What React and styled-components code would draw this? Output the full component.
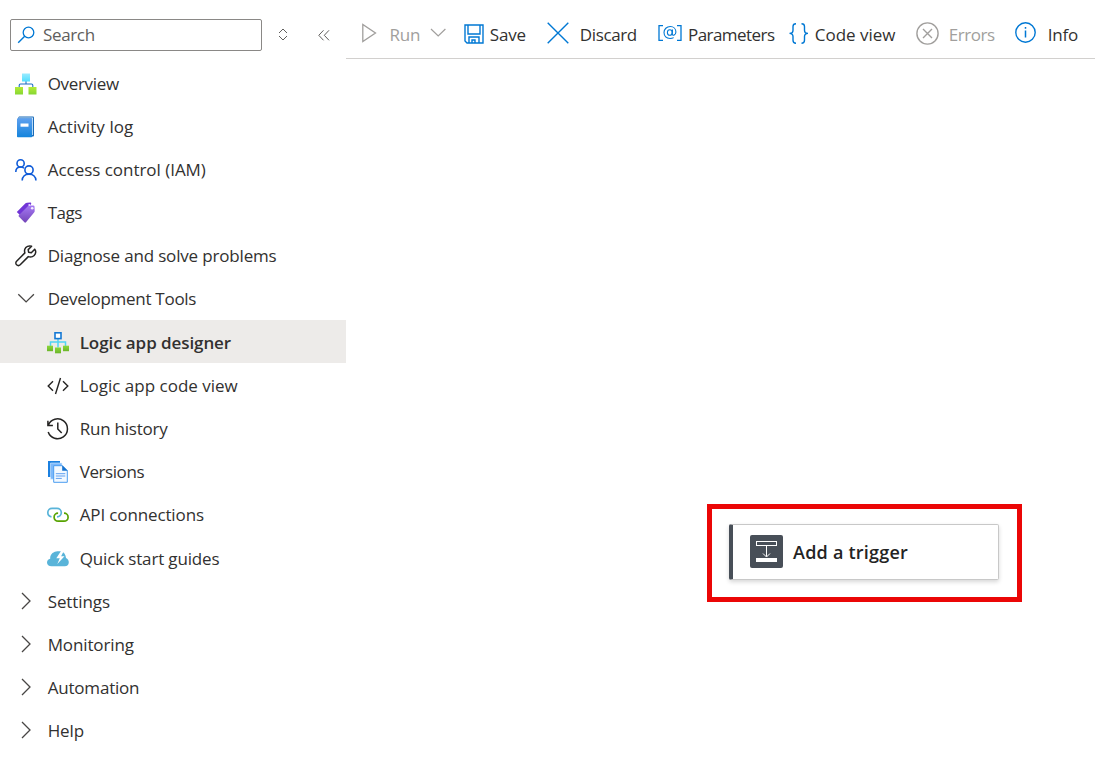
import React from 'react';
import styled, { createGlobalStyle } from 'styled-components';

const GlobalStyle = createGlobalStyle`
  * { box-sizing: border-box; }
  body { margin: 0; background: #fff; color: #323130; font-family: "Open Sans", "Noto Sans", sans-serif; font-size: 17px; }
`;
const Page = styled.div`display: flex; height: 764px; overflow: hidden;`;
const Sidebar = styled.nav`width: 346px; flex: none; display: flex; flex-direction: column;`;
const SearchBar = styled.div`height: 61.2px; padding: 19px 0 0 10px; display: flex; align-items: flex-start;`;
const SearchBox = styled.div`
  width: 252px; height: 32px; border: 1px solid #8a8886; border-radius: 2px; color: #605e5c;
  display: flex; align-items: center; padding-left: 6px; gap: 8px;
`;
const SearchTool = styled.div`height: 32px; display: flex; align-items: center; margin-left: ${p => p.$gap}px;`;
const Label = styled.span`white-space: nowrap; line-height: 24px; letter-spacing: ${p => p.$ls || 0}px;`;
const NavRow = styled.div`
  height: 43.18px; flex: none; display: flex; align-items: center; gap: 10.7px;
  padding-top: 1.7px;
  padding-left: ${p => (p.$sub ? 47 : 15)}px;
  background: ${p => (p.$active ? '#edebe9' : 'transparent')};
  font-weight: ${p => (p.$active ? 600 : 400)};
`;
const Main = styled.main`flex: 1; min-width: 0; display: flex; flex-direction: column;`;
const Toolbar = styled.div`height: 59px; flex: none; border-bottom: 1px solid #d2d0ce; display: flex; padding: 8px 0 0 16px; align-items: center;`;
const ToolButton = styled.div`
  width: ${p => p.$w}px; flex: none; display: flex; align-items: center; gap: ${p => p.$gap}px;
  color: ${p => (p.$disabled ? '#a19f9d' : '#323130')};
`;
const ToolLabel = styled(Label)`padding-top: 3px;`;
const Canvas = styled.section`flex: 1; display: flex; padding: 445px 0 0 361px; align-items: flex-start;`;
const Highlight = styled.div`width: 315px; height: 98px; border: 5px solid #eb0606; padding: 15px 0 0 17px;`;
const TriggerCard = styled.div`
  width: 270px; height: 56px; border: 1px solid #c8c8c8; border-left: 4px solid #484f58; border-radius: 2px;
  box-shadow: 0 2px 4px rgba(0,0,0,.16); display: flex; align-items: center; gap: 10.5px; padding: 0 0 1px 16.5px;
  font-weight: 600; font-size: 18px; color: #242424;
`;

const Svg = styled.svg`flex: none; display: block; fill: none; overflow: visible;`;
const Ic = ({ w = 22, h = 22, children }) => <Svg width={w} height={h} viewBox={`0 0 ${w} ${h}`}>{children}</Svg>;

const icons = {
  overview: <Ic>
    <defs>
      <linearGradient id="cy" x2="0" y2="1"><stop stopColor="#9cebff" /><stop offset="1" stopColor="#50dfff" /></linearGradient>
      <linearGradient id="gr" x2="0" y2="1"><stop stopColor="#b4ec36" /><stop offset="1" stopColor="#86d633" /></linearGradient>
    </defs>
    <path d="M11 8v3M4.200 14v-1.700q0-1.300 1.300-1.300h11q1.300 0 1.300 1.300V14" stroke="#1f6fc5" strokeWidth="1.100" />
    <rect x="7" y="0.500" width="8" height="8" fill="url(#cy)" />
    <rect x="0" y="14" width="8" height="7.500" fill="url(#gr)" /><rect x="13.500" y="14" width="8" height="7.500" fill="url(#gr)" />
  </Ic>,
  log: <Ic>
    <defs><linearGradient id="bl" x2="0" y2="1"><stop stopColor="#5ea0ef" /><stop offset="1" stopColor="#1484dc" /></linearGradient></defs>
    <path d="M4 .5h14q1 0 1 1v18q0 1-1 1H3V2z" fill="#1a6bb8" /><path d="M4 1.400h14v17.500h-1V2.500H3.200z" fill="#d6ebfa" />
    <rect x="2" y="2.200" width="15.200" height="19" rx=".8" fill="url(#bl)" /><rect x="5.500" y="7.500" width="8" height="3.200" fill="#fff" />
  </Ic>,
  access: <Ic>
    <g stroke="#0f5bd8" strokeWidth="1.600"><circle cx="5.600" cy="4.400" r="3.600" /><circle cx="14" cy="11" r="4.100" /><path d="M.8 13c0-3 2-5 4.900-5 1.400 0 2.500.4 3.300 1.200M7.200 21.500c0-4 3-6.400 6.800-6.400s6.900 2.400 6.900 6.400" /></g>
  </Ic>,
  tags: <Ic>
    <defs><linearGradient id="pu" x2="0" y2="1"><stop stopColor="#a67af4" /><stop offset="1" stopColor="#7345b8" /></linearGradient></defs>
    <path d="M1.800 10 10.500 1.300q.6-.6 1.500-.6l3.300-.2q1 0 1 1L8 16z" fill="#7135d6" />
    <path d="M3.800 13.300 12.800 4.200q.6-.6 1.400-.6l4.200-.2q1 0 1.100 1l.2 4.700q0 .9-.6 1.500L11 20.300q-.8.800-1.600 0L3.800 14.600q-.6-.600 0-1.300z" fill="url(#pu)" />
    <circle cx="14.300" cy="3" r="1" fill="#e8dbff" /><circle cx="17.200" cy="6.200" r="1.300" fill="#f4eeff" />
  </Ic>,
  wrench: <Ic><path d="M19.700 4.200 16.300 7.700 13.600 7.200 13.200 4.600 16.600 1.300C14 .2 10.700 1.500 9.800 4.300c-.4 1.200-.3 2.500.1 3.600L1.600 16.200c-1 1-1 2.600 0 3.600s2.600 1 3.600 0l8.100-8.200c2.700 1.100 5.900-.1 7-2.900.7-1.600.3-3.400-.6-4.500z" stroke="#252423" strokeWidth="1.500" strokeLinejoin="round" /></Ic>,
  down: <Ic><path d="m3.300 6.200 7.800 7.700 7.800-7.700" stroke="#484644" strokeWidth="1.300" /></Ic>,
  right: <Ic><path d="m7 2 8 8-8 8" stroke="#484644" strokeWidth="1.300" /></Ic>,
  designer: <Ic>
    <defs><linearGradient id="dg" x2="0" y2="1"><stop stopColor="#8cd83a" /><stop offset="1" stopColor="#6bb52a" /></linearGradient></defs>
    <path d="M11 6.500v9M3.500 14v-4h15v4" stroke="#50d4f5" strokeWidth="1.500" />
    <rect x="8" y=".8" width="6" height="5.800" fill="#fff" stroke="#1478d4" strokeWidth="1.600" />
    <g fill="url(#dg)"><rect x="0" y="13.700" width="6" height="5.500" /><rect x="8" y="15.500" width="6" height="5.800" /><rect x="16" y="13.700" width="6" height="5.500" /></g>
  </Ic>,
  code: <Ic><path d="M6 6.200 1.200 11 6 15.800M16 6.200l4.800 4.800-4.800 4.800M13.500 3 8.500 19" stroke="#252423" strokeWidth="1.400" /></Ic>,
  history: <Ic><path d="M1.300 7.300A9.900 9.900 0 1 1 1.200 14M.9 2.800v4.800h5M10.800 4.500V11l3.900 4" stroke="#252423" strokeWidth="1.500" /></Ic>,
  versions: <Ic>
    <path d="M1 0h12v16H1z" fill="#1b80e0" /><path d="M3.500 2H15v16.200H3.500z" fill="#7cb8fa" stroke="#dceeff" strokeWidth=".6" />
    <path d="M6.700 4.700h8.600l5 5v11.600H6.700z" fill="#f3f9ff" stroke="#4a9df0" strokeWidth="1" />
    <path d="M15.200 4.200v5.600h5.600z" fill="#1672ce" /><path d="M8.800 12.700h9.500M8.800 15h9.500M8.800 17.400h6" stroke="#5e9ff0" strokeWidth="1" />
  </Ic>,
  api: <Ic>
    <path d="M4.500 12.800C2.300 12.500.8 10.700.8 8.600c0-2.400 1.800-4.200 4.200-4.200h5c2.400 0 4.300 1.800 4.300 4.200s-1.900 4.200-4.300 4.200" stroke="#59b4d9" strokeWidth="1.700" />
    <path d="M17 9.200c2.300 0 4.100 1.700 4.100 4s-1.800 4-4.100 4h-5.800c-2.300 0-4.100-1.700-4.100-4 0-2.200 1.700-4 4-4" stroke="#57a300" strokeWidth="1.700" />
  </Ic>,
  quick: <Ic>
    <path d="M4.500 18.300C1.800 18.300 0 16.800 0 14.500c0-2 1.300-3.500 3.200-3.800C3 7 5.300 4.200 9.200 3.500c1.700-.3 3.600-.2 5.300.1 2.500.6 4.300 3.300 4.500 6.300 1.800.7 2.800 2.300 2.800 4.300 0 2.500-1.600 4.100-4 4.100z" fill="#59b4d9" />
    <path d="m14 3-4.700 7.200h3.500L10.300 16l7.200-7.700h-3.400L16.800 3z" fill="#fff" />
  </Ic>,
};

const nav = [
  { icon: 'overview', text: 'Overview', ls: -0.32 },
  { icon: 'log', text: 'Activity log', ls: 0.08 },
  { icon: 'access', text: 'Access control (IAM)', ls: -0.03 },
  { icon: 'tags', text: 'Tags', ls: -0.5 },
  { icon: 'wrench', text: 'Diagnose and solve problems', ls: -0.17 },
  { icon: 'down', text: 'Development Tools', ls: -0.28 },
  { icon: 'designer', text: 'Logic app designer', ls: -0.08, sub: true, active: true },
  { icon: 'code', text: 'Logic app code view', ls: 0, sub: true },
  { icon: 'history', text: 'Run history', ls: -0.23, sub: true },
  { icon: 'versions', text: 'Versions', ls: -0.42, sub: true },
  { icon: 'api', text: 'API connections', ls: -0.13, sub: true },
  { icon: 'quick', text: 'Quick start guides', ls: -0.15, sub: true },
  { icon: 'right', text: 'Settings', ls: -0.1 },
  { icon: 'right', text: 'Monitoring', ls: -0.13 },
  { icon: 'right', text: 'Automation', ls: -0.2 },
  { icon: 'right', text: 'Help', ls: -0.1 },
];

const blue = '#0078d4';

export default function App() {
  return (
    <Page>
      <GlobalStyle />
      <Sidebar>
        <SearchBar>
          <SearchBox>
            <Ic w={18} h={18}><circle cx="11.500" cy="6.500" r="5.300" stroke={blue} strokeWidth="1.300" /><path d="M7.700 10.300 1.200 16.700" stroke={blue} strokeWidth="1.400" /></Ic>
            <Label $ls={-0.35}>Search</Label>
          </SearchBox>
          <SearchTool $gap={16.3}><Ic w={10} h={14}><path d="M1 5 5 1 9 5M1 8l4 4 4-4" stroke="#605e5c" /></Ic></SearchTool>
          <SearchTool $gap={30}><Ic w={12} h={12}><path d="M5.500 1.300.8 6.300l4.700 5M11 1.300l-4.700 5 4.700 5" stroke="#605e5c" /></Ic></SearchTool>
        </SearchBar>
        {nav.map(n => (
          <NavRow key={n.text} $sub={n.sub} $active={n.active}>{icons[n.icon]}<Label $ls={n.ls}>{n.text}</Label></NavRow>
        ))}
      </Sidebar>
      <Main>
        <Toolbar>
          <ToolButton $w={102} $gap={12.5} $disabled>
            <Ic w={15} h={20}><path d="M.8 1.500v17L13.500 10z" stroke="#a19f9d" strokeWidth="1.300" /></Ic><ToolLabel $ls={-0.2}>Run</ToolLabel>
            <Ic w={16} h={10}><path d="m-2 1 7.200 7 7.200-7" stroke="#a19f9d" strokeWidth="1.200" /></Ic>
          </ToolButton>
          <ToolButton $w={83} $gap={5.8}><Ic w={20} h={20}><path d="M1 2h18v18H3l-2-2zM4 2v9h12V2M5 20v-6h10v6M8 20v-3h3v3" stroke={blue} strokeWidth="1.400" /></Ic><ToolLabel $ls={-0.2}>Save</ToolLabel></ToolButton>
          <ToolButton $w={111} $gap={10.8}><Ic><path d="m.7.7 20.600 20.600M21.300.7.700 21.300" stroke={blue} strokeWidth="1.400" /></Ic><ToolLabel $ls={-0.38}>Discard</ToolLabel></ToolButton>
          <ToolButton $w={131} $gap={6}>
            <Ic w={24} h={16}>
              <path d="M5 .7H1v14.600h4M19 .7h4v14.600h-4" stroke={blue} strokeWidth="1.300" />
              <ellipse cx="11.800" cy="7.500" rx="2.400" ry="2.800" stroke={blue} strokeWidth="1.100" />
              <path d="M14.500 4.500 14.200 8.800c-.1 2.300 3.700 1.800 3.700-1.700C17.900 3.800 15.500 1.500 12.300 1.500 8.700 1.500 6 4.100 6 7.600s2.400 5.900 6 5.900c1.500 0 2.700-.3 3.700-.9" stroke={blue} strokeWidth="1.100" />
            </Ic>
            <ToolLabel $ls={-0.55}>Parameters</ToolLabel>
          </ToolButton>
          <ToolButton $w={127} $gap={5.8}><Ic w={20} h={21}><path d="M7 .8C5 .8 4 1.500 4 3.500v3.700c0 2-1 3.200-3.500 3.200C3 10.400 4 11.600 4 13.600v3.700c0 2 1 2.900 3 2.900M12.500.8c2 0 3 .7 3 2.700v3.700c0 2 1 3.200 3.500 3.200-2.500 0-3.500 1.200-3.500 3.200v3.700c0 2-1 2.900-3 2.900" stroke={blue} strokeWidth="1.400" /></Ic><ToolLabel $ls={-0.03}>Code view</ToolLabel></ToolButton>
          <ToolButton $w={99} $gap={9.8} $disabled><Ic w={23} h={23}><circle cx="11.500" cy="11.500" r="10.600" stroke="#a19f9d" strokeWidth="1.400" /><path d="m7 7 9 9M16 7l-9 9" stroke="#a19f9d" strokeWidth="1.400" /></Ic><ToolLabel $ls={-0.48}>Errors</ToolLabel></ToolButton>
          <ToolButton $w={80} $gap={10.8}><Ic><circle cx="10.500" cy="10.500" r="9.700" stroke={blue} strokeWidth="1.400" /><path d="M10.500 8.500v7M10.500 5v1.800" stroke={blue} strokeWidth="1.500" /></Ic><ToolLabel $ls={-0.2}>Info</ToolLabel></ToolButton>
        </Toolbar>
        <Canvas>
          <Highlight>
            <TriggerCard>
              <Ic w={33} h={33}><rect width="33" height="33" rx="2" fill="#484f58" /><rect x="6.500" y="6.500" width="20" height="4" stroke="#fff" /><path d="M16.500 10.500v11M13 18.500l3.500 3.500 3.500-3.500" stroke="#fff" /><rect x="6" y="23" width="21" height="4" fill="#fff" /></Ic>
              <Label $ls={0.23}>Add a trigger</Label>
            </TriggerCard>
          </Highlight>
        </Canvas>
      </Main>
    </Page>
  );
}
